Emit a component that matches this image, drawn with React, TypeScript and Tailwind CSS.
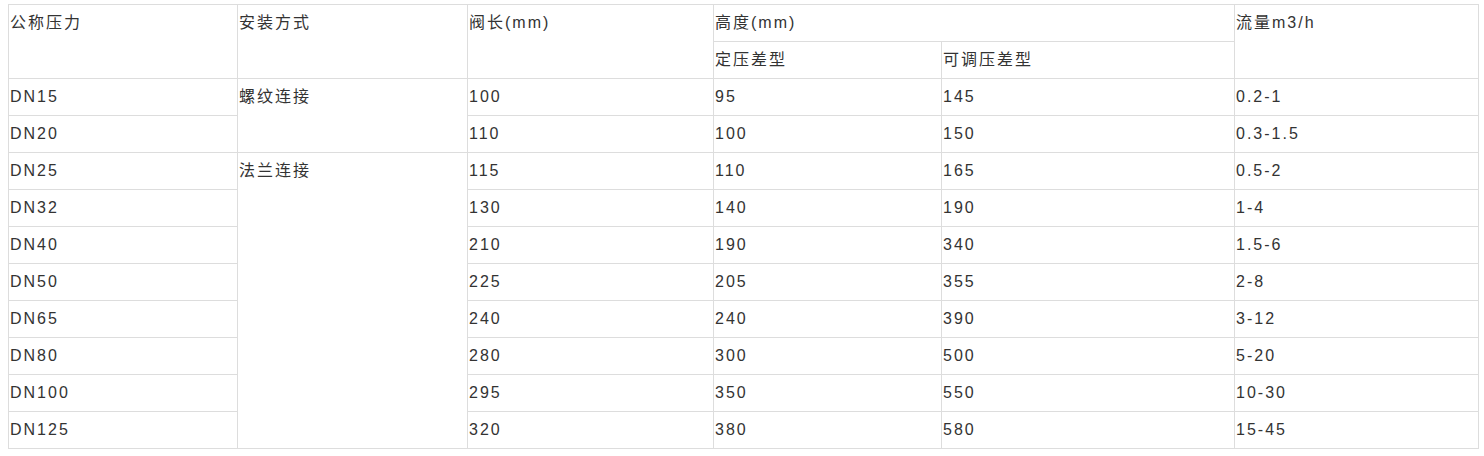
const rows = [
  ['DN15', '100', '95', '145', '0.2-1'],
  ['DN20', '110', '100', '150', '0.3-1.5'],
  ['DN25', '115', '110', '165', '0.5-2'],
  ['DN32', '130', '140', '190', '1-4'],
  ['DN40', '210', '190', '340', '1.5-6'],
  ['DN50', '225', '205', '355', '2-8'],
  ['DN65', '240', '240', '390', '3-12'],
  ['DN80', '280', '300', '500', '5-20'],
  ['DN100', '295', '350', '550', '10-30'],
  ['DN125', '320', '380', '580', '15-45'],
];

const cell = 'border border-[#dddddd] align-top pl-[1px] pt-[6px] pb-[6px] leading-[24px] text-left font-normal';

export default function App() {
  return (
    <div className="bg-white min-h-[456px] pt-[4px] pl-[8px] font-['Liberation_Sans','Noto_Sans_CJK_SC',sans-serif] text-[16px] text-[#333333] tracking-[2px]">
      <table className="border-collapse table-fixed w-[1470px]">
        <colgroup>
          <col className="w-[229px]" />
          <col className="w-[230px]" />
          <col className="w-[246px]" />
          <col className="w-[228px]" />
          <col className="w-[293px]" />
          <col className="w-[244px]" />
        </colgroup>
        <thead>
          <tr>
            <th rowSpan={2} className={cell}>公称压力</th>
            <th rowSpan={2} className={cell}>安装方式</th>
            <th rowSpan={2} className={cell}>阀长(mm)</th>
            <th colSpan={2} className={cell}>高度(mm)</th>
            <th rowSpan={2} className={cell}>流量m3/h</th>
          </tr>
          <tr>
            <th className={cell}>定压差型</th>
            <th className={cell}>可调压差型</th>
          </tr>
        </thead>
        <tbody>
          {rows.map((r, i) => (
            <tr key={r[0]}>
              <td className={cell}>{r[0]}</td>
              {i === 0 && <td rowSpan={2} className={cell}>螺纹连接</td>}
              {i === 2 && <td rowSpan={8} className={cell}>法兰连接</td>}
              <td className={cell}>{r[1]}</td>
              <td className={cell}>{r[2]}</td>
              <td className={cell}>{r[3]}</td>
              <td className={cell}>{r[4]}</td>
            </tr>
          ))}
        </tbody>
      </table>
    </div>
  );
}
